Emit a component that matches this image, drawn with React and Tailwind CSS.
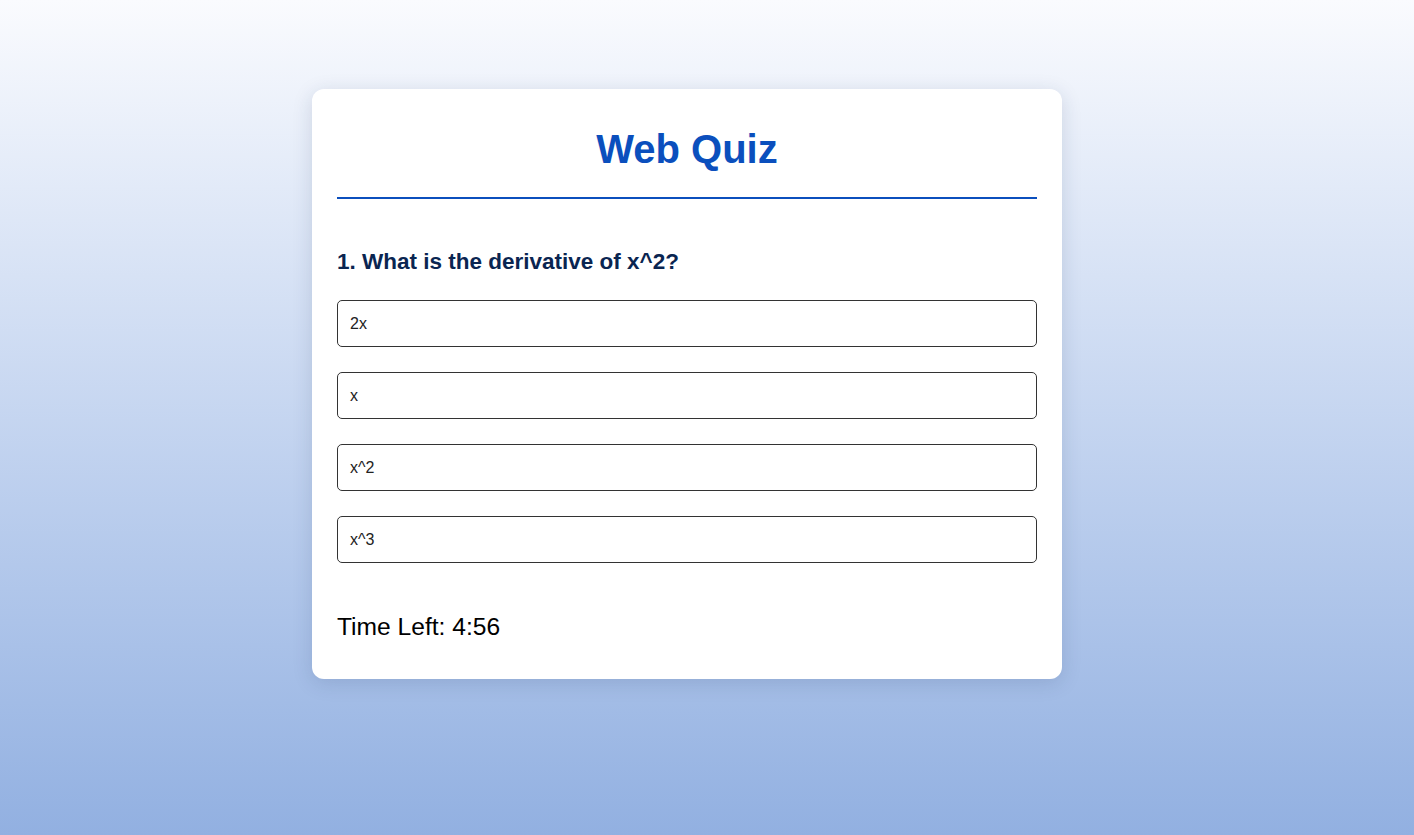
export default function App() {
  const options = ["2x", "x", "x^2", "x^3"];
  return (
    <div
      className="min-h-[835px] w-full bg-gradient-to-b from-[#fafbfe] to-[#92b0e1] pt-[89px] pr-[40px] flex justify-center"
      style={{ fontFamily: '"Liberation Sans", Arial, sans-serif' }}
    >
      <div className="w-[750px] h-[590px] bg-white rounded-[12px] shadow-[0_4px_20px_rgba(30,50,90,0.15)] px-[25px] pt-[37px] flex flex-col">
        <div className="border-b-2 border-[#0b4fbd] pb-[25px]">
          <h1 className="text-[40px] leading-[46px] font-bold text-[#0b4fbd] text-center">Web Quiz</h1>
        </div>
        <h2 className="mt-[50px] text-[22.5px] leading-[26px] font-bold text-[#0a2551]">
          1. What is the derivative of x^2?
        </h2>
        <div className="mt-[25px] flex flex-col gap-[25px]">
          {options.map((o) => (
            <div
              key={o}
              className="h-[47px] border border-[#333] rounded-[5px] pl-3 flex items-center text-[16px] text-[#222]"
            >
              {o}
            </div>
          ))}
        </div>
        <div className="mt-[50px] text-[24.6px] leading-[28px] text-black">Time Left: 4:56</div>
      </div>
    </div>
  );
}
